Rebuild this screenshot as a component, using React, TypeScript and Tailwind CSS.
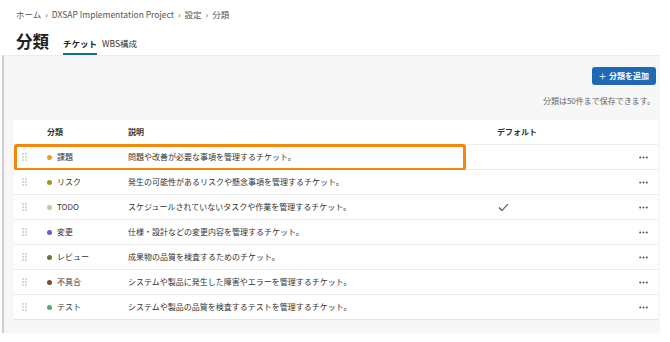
const rows = [
  { name: '課題', color: '#e9a21b', desc: '問題や改善が必要な事項を管理するチケット。', def: false, hl: true },
  { name: 'リスク', color: '#9c9a1c', desc: '発生の可能性があるリスクや懸念事項を管理するチケット。', def: false },
  { name: 'TODO', color: '#b3d19f', desc: 'スケジュールされていないタスクや作業を管理するチケット。', def: true },
  { name: '変更', color: '#7758c6', desc: '仕様・設計などの変更内容を管理するチケット。', def: false },
  { name: 'レビュー', color: '#5f7a3b', desc: '成果物の品質を検査するためのチケット。', def: false },
  { name: '不具合', color: '#7b4f2c', desc: 'システムや製品に発生した障害やエラーを管理するチケット。', def: false },
  { name: 'テスト', color: '#4fae7c', desc: 'システムや製品の品質を検査するテストを管理するチケット。', def: false },
];

function DragHandle() {
  return (
    <svg width="5" height="8" viewBox="0 0 5 8" className="text-[#a8a8a8]">
      {[1, 4].map((x) =>
        [1, 4, 7].map((y) => <circle key={`${x}-${y}`} cx={x} cy={y} r="0.8" fill="currentColor" />)
      )}
    </svg>
  );
}

function MoreDots() {
  return (
    <svg width="9" height="3" viewBox="0 0 9 3" className="text-[#555]">
      <circle cx="1.2" cy="1.5" r="1" fill="currentColor" />
      <circle cx="4.5" cy="1.5" r="1" fill="currentColor" />
      <circle cx="7.8" cy="1.5" r="1" fill="currentColor" />
    </svg>
  );
}

export default function App() {
  return (
    <div
      className="w-[670px] h-[342px] bg-white text-[#333] overflow-hidden"
      style={{ fontFamily: '"Noto Sans CJK JP", "Noto Sans", sans-serif' }}
    >
      {/* Header */}
      <div className="h-[55px] px-4 pt-[8px]">
        <div className="flex items-center gap-[4px] text-[8.5px] text-[#555] leading-none h-[12px]">
          <span>ホーム</span>
          <span>›</span>
          <span>DXSAP Implementation Project</span>
          <span>›</span>
          <span>設定</span>
          <span>›</span>
          <span>分類</span>
        </div>
        <div className="flex items-end mt-[9px] h-[26px]">
          <h1 className="text-[16.5px] font-bold leading-none text-[#222] pb-[6px]">分類</h1>
          <div className="flex ml-[14px] gap-[5px] text-[8.5px] leading-none">
            <div className="font-bold text-[#222] pb-[6px] border-b-2 border-[#1b6d8c]">チケット</div>
            <div className="text-[#333] pb-[6px] border-b-2 border-transparent">WBS構成</div>
          </div>
        </div>
      </div>

      {/* Content */}
      <div className="ml-[2px] w-[658px] h-[278px] border-l-2 border-[#cfcfcf] border-t border-t-[#ececec] bg-[#f7f7f7] pl-[10px] pr-[2px]">
        <div className="flex justify-end pt-[11px] pr-[2px]">
          <button className="h-[18px] w-[64px] rounded-[3px] bg-[#1f69b3] text-white text-[8px] font-bold flex items-center justify-center gap-[3px]">
            <span className="text-[13px] font-light leading-none -mt-[1px]">+</span>
            <span>分類を追加</span>
          </button>
        </div>
        <div className="text-right text-[8px] text-[#666] mt-[12px] pr-[3px] leading-none">
          分類は50件まで保存できます。
        </div>

        <div className="mt-[15px] w-[644px] flex flex-col gap-[1px] bg-[#ececec] border-b border-[#e4e4e4]">
          <div className="h-[24px] bg-white flex items-center text-[8px] font-bold text-[#333]">
            <div className="w-[33px]" />
            <div className="w-[81px]">分類</div>
            <div className="w-[369px]">説明</div>
            <div className="w-[80px]">デフォルト</div>
          </div>
          {rows.map((r) => (
            <div key={r.name} className="relative h-[24px] bg-white flex items-center text-[8px] text-[#333]">
              <div className="w-[33px] flex justify-start pl-[8px]">
                <DragHandle />
              </div>
              <div className="w-[81px] flex items-center gap-[5px]">
                <span className="w-[5px] h-[5px] rounded-full" style={{ backgroundColor: r.color }} />
                <span>{r.name}</span>
              </div>
              <div className="w-[369px]">{r.desc}</div>
              <div className="w-[60px] flex justify-start pl-[1px]">
                {r.def && (
                  <svg width="11" height="9" viewBox="0 0 11 9" fill="none" stroke="#444" strokeWidth="1.1">
                    <path d="M1 4.5 L4 7.5 L10 1" />
                  </svg>
                )}
              </div>
              <div className="flex-1 flex justify-end pr-[10px]">
                <MoreDots />
              </div>
              {r.hl && (
                <div className="absolute left-0 -top-[1px] w-[452px] h-[27px] border-[3px] border-[#f5870a] rounded-[3px] pointer-events-none" />
              )}
            </div>
          ))}
        </div>
      </div>
    </div>
  );
}
